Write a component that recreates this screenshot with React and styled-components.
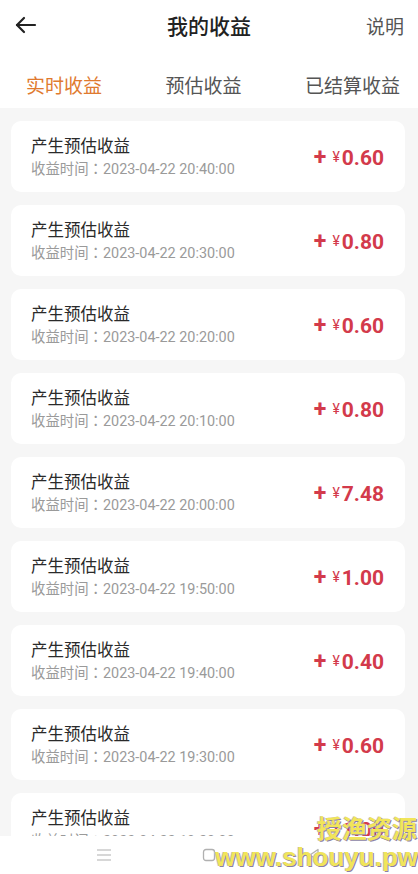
import React from 'react';
import styled, { createGlobalStyle } from 'styled-components';

const GlobalStyle = createGlobalStyle`
  html, body {
    margin: 0;
    padding: 0;
    background: #ffffff;
  }
  body {
    font-family: Roboto, "Noto Sans CJK SC", sans-serif;
  }
`

const Page = styled.div`
  position: relative;
  width: 418px;
  height: 874px;
  display: flex;
  flex-direction: column;
  overflow: hidden;
  background: #f6f6f6;
`

const Header = styled.div`
  height: 50px;
  flex-shrink: 0;
  display: grid;
  grid-template-columns: 70px 1fr 70px;
  align-items: center;
  background: #fff;
  padding: 0 14px 0 14px;
`

const BackButton = styled.div`
  display: flex;
  align-items: center;
  color: #222;
`

const Title = styled.div`
  text-align: center;
  font-size: 21px;
  font-weight: 500;
  color: #222;
`

const HelpLink = styled.div`
  text-align: right;
  font-size: 19px;
  color: #555;
`

const Tabs = styled.div`
  height: 58px;
  flex-shrink: 0;
  display: flex;
  justify-content: space-between;
  align-items: center;
  background: #fff;
  padding: 10px 18px 0 26px;
  box-sizing: border-box;
`

const Tab = styled.div`
  font-size: 19px;
  color: ${p => (p.active ? '#e07a2f' : '#555')};
`

const List = styled.div`
  flex: 1;
  overflow: hidden;
  display: flex;
  flex-direction: column;
  gap: 13px;
  padding: 13px 13px 0 11px;
`

const Card = styled.div`
  flex-shrink: 0;
  height: 71px;
  box-sizing: border-box;
  display: flex;
  align-items: center;
  justify-content: space-between;
  background: #fff;
  border-radius: 10px;
  padding: 1px 21px 0 20px;
`

const Info = styled.div`
  display: flex;
  flex-direction: column;
`

const CardTitle = styled.div`
  font-size: 16.5px;
  line-height: 22px;
  height: 22px;
  color: #2a2a2a;
`

const CardTime = styled.div`
  font-size: 14.4px;
  line-height: 20px;
  height: 20px;
  color: #9a9a9a;
`

const Colon = styled.span`
  font-family: "Noto Sans CJK TC", sans-serif;
`

const Amount = styled.div`
  display: flex;
  align-items: baseline;
  color: #d33a4b;
  font-weight: 700;
`

const Plus = styled.span`
  font-size: 23px;
  margin-right: 6px;
`

const Yen = styled.span`
  font-size: 14px;
  font-weight: 400;
  margin-right: 2px;
  position: relative;
  top: -3px;
`

const Value = styled.span`
  font-size: 21px;
`

const NavBar = styled.div`
  height: 38px;
  flex-shrink: 0;
  display: grid;
  grid-template-columns: 1fr 1fr 1fr;
  align-items: center;
  justify-items: center;
  background: #fff;
  padding: 0 52px;
  color: #b0b0b0;
`

const Watermark = styled.div`
  position: absolute;
  right: 0;
  bottom: 0;
  display: flex;
  flex-direction: column;
  align-items: flex-end;
  pointer-events: none;
  font-family: "Liberation Sans", "Noto Sans CJK SC", sans-serif;
  font-weight: 700;
  color: #f1e55a;
  text-shadow: 1px 1px 0 #8c7fa6, -1px 0 0 #c9c0d8;
  line-height: 1;
`

const MarkCn = styled.div`
  font-family: "Noto Sans CJK SC", sans-serif;
  font-size: 25px;
  font-weight: 700;
  margin-bottom: 4px;
  margin-right: 1px;
`

const MarkUrl = styled.div`
  font-size: 26px;
  margin-bottom: 4px;
`

const records = [
  { time: '20:40:00', value: '0.60' },
  { time: '20:30:00', value: '0.80' },
  { time: '20:20:00', value: '0.60' },
  { time: '20:10:00', value: '0.80' },
  { time: '20:00:00', value: '7.48' },
  { time: '19:50:00', value: '1.00' },
  { time: '19:40:00', value: '0.40' },
  { time: '19:30:00', value: '0.60' },
  { time: '19:20:00', value: '1.00' },
]

export default function App() {
  return (
    <>
      <GlobalStyle />
      <Page>
        <Header>
          <BackButton>
            <svg width="24" height="24" viewBox="0 0 24 24" fill="none" stroke="currentColor" strokeWidth="2.2" strokeLinecap="round" strokeLinejoin="round">
              <path d="M21 12H3" />
              <path d="M10 5l-7 7 7 7" />
            </svg>
          </BackButton>
          <Title>我的收益</Title>
          <HelpLink>说明</HelpLink>
        </Header>
        <Tabs>
          <Tab active>实时收益</Tab>
          <Tab>预估收益</Tab>
          <Tab>已结算收益</Tab>
        </Tabs>
        <List>
          {records.map((r, i) => (
            <Card key={i}>
              <Info>
                <CardTitle>产生预估收益</CardTitle>
                <CardTime>收益时间<Colon>：</Colon>2023-04-22 {r.time}</CardTime>
              </Info>
              <Amount>
                <Plus>+</Plus>
                <Yen>¥</Yen>
                <Value>{r.value}</Value>
              </Amount>
            </Card>
          ))}
        </List>
        <NavBar>
          <svg width="16" height="14" viewBox="0 0 16 14" fill="none" stroke="currentColor" strokeWidth="1.2">
            <path d="M1 2h14M1 7h14M1 12h14" />
          </svg>
          <svg width="14" height="14" viewBox="0 0 14 14" fill="none" stroke="currentColor" strokeWidth="1.3">
            <rect x="1.5" y="1.5" width="11" height="11" rx="2.5" />
          </svg>
          <svg width="14" height="14" viewBox="0 0 14 14" fill="none" stroke="currentColor" strokeWidth="1.3" strokeLinejoin="round">
            <path d="M11 1.5L3 7l8 5.5z" />
          </svg>
        </NavBar>
        <Watermark>
          <MarkCn>授渔资源</MarkCn>
          <MarkUrl>www.shouyu.pw</MarkUrl>
        </Watermark>
      </Page>
    </>
  )
}
